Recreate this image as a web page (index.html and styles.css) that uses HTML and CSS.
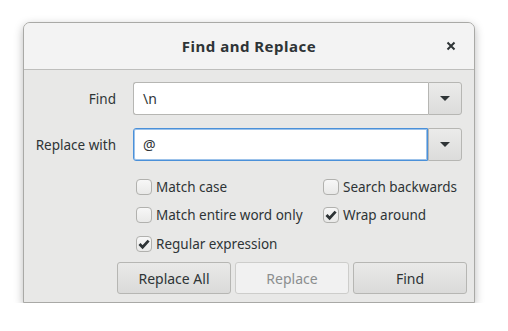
FILE: index.html
```html
<!DOCTYPE html>
<html>
<head>
<meta charset="utf-8">
<link rel="stylesheet" href="styles.css">
</head>
<body>
<div class="dialog">
  <div class="header">
    <div class="title">Find and Replace</div>
    <div class="close">
      <svg width="10" height="10" viewBox="0 0 10 10"><path d="M1.5 1.5 L8.5 8.5 M8.5 1.5 L1.5 8.5" stroke="#2e3436" stroke-width="2" fill="none"/></svg>
    </div>
  </div>
  <div class="content">
    <div class="form">
      <label class="label">Find</label>
      <div class="combo">
        <div class="entry">\n</div>
        <div class="drop"><span class="arrow"></span></div>
      </div>
      <label class="label">Replace with</label>
      <div class="combo">
        <div class="entry focus">@</div>
        <div class="drop"><span class="arrow"></span></div>
      </div>
    </div>
    <div class="options">
      <div class="opt"><span class="box"></span>Match case</div>
      <div class="opt"><span class="box"></span>Search backwards</div>
      <div class="opt"><span class="box"></span>Match entire word only</div>
      <div class="opt"><span class="box checked"><svg width="12" height="12" viewBox="0 0 12 12"><path d="M1.5 6 L4.6 9.2 L10.6 2.6" stroke="#2e3436" stroke-width="2.8" fill="none"/></svg></span>Wrap around</div>
      <div class="opt"><span class="box checked"><svg width="12" height="12" viewBox="0 0 12 12"><path d="M1.5 6 L4.6 9.2 L10.6 2.6" stroke="#2e3436" stroke-width="2.8" fill="none"/></svg></span>Regular expression</div>
    </div>
    <div class="buttons">
      <div class="btn">Replace All</div>
      <div class="btn disabled">Replace</div>
      <div class="btn">Find</div>
    </div>
  </div>
</div>
</body>
</html>
```
FILE: styles.css
```css
html, body {
  margin: 0;
  padding: 0;
  background: #ffffff;
}
body {
  padding: 22px 0 0 23px;
  font-family: "Noto Sans", "DejaVu Sans", sans-serif;
  font-size: 13.5px;
  color: #2e3436;
}
.dialog {
  width: 450px;
  height: 279px;
  border: 1px solid #a9a9a6;
  border-radius: 7px 7px 0 0;
  background: #e8e8e7;
  box-shadow: 0 3px 10px rgba(0,0,0,0.28);
  overflow: hidden;
  display: flex;
  flex-direction: column;
}
.header {
  height: 46px;
  background: #f3f3f3;
  border-bottom: 1px solid #bebebc;
  display: flex;
  align-items: center;
  justify-content: center;
  position: relative;
}
.title {
  font-weight: bold;
  font-size: 15px;
  letter-spacing: 0.5px;
  color: #2e3436;
}
.close {
  position: absolute;
  right: 18px;
  top: 18px;
  width: 10px;
  height: 10px;
  display: flex;
}
.content {
  padding: 12px 12px 0 11px;
  display: flex;
  flex-direction: column;
}
.form {
  display: grid;
  grid-template-columns: 81px 1fr;
  column-gap: 17px;
  row-gap: 13px;
  align-items: center;
}
.label {
  text-align: right;
  white-space: nowrap;
}
.combo {
  display: flex;
  height: 33px;
}
.entry {
  flex: 1;
  background: #ffffff;
  border: 1px solid #b6b6b3;
  border-right: none;
  border-radius: 3px 0 0 3px;
  padding: 0 9px;
  display: flex;
  align-items: center;
  font-size: 14px;
}
.entry.focus {
  border: 1px solid #4a90d9;
  box-shadow: inset 0 0 0 1px rgba(74,144,217,0.55);
  border-radius: 3px 0 0 3px;
}
.drop {
  width: 32px;
  border: 1px solid #b6b6b3;
  border-radius: 0 3px 3px 0;
  background: linear-gradient(#ebebea, #dcdcdb);
  display: flex;
  align-items: center;
  justify-content: center;
}
.arrow {
  width: 0;
  height: 0;
  border-left: 5px solid transparent;
  border-right: 5px solid transparent;
  border-top: 5px solid #2e3436;
}
.options {
  margin: 17px 0 0 101px;
  display: grid;
  grid-template-columns: 187px auto;
  grid-auto-rows: 20px;
  row-gap: 8.5px;
}
.opt {
  display: flex;
  align-items: center;
  gap: 4px;
  white-space: nowrap;
  margin-top: -3px;
}
.box {
  width: 14px;
  height: 14px;
  border: 1px solid #b1b1ae;
  border-radius: 4px;
  background: linear-gradient(#f7f7f7, #e9e9e8);
  display: flex;
  align-items: center;
  justify-content: center;
}
.buttons {
  margin: 7px -5px 0 0;
  display: flex;
  justify-content: flex-end;
  gap: 4px;
}
.btn {
  width: 112px;
  height: 30px;
  border: 1px solid #b6b6b3;
  border-radius: 3px;
  background: linear-gradient(#e9e9e8, #dadad9);
  display: flex;
  align-items: center;
  justify-content: center;
  font-size: 14px;
}
.btn.disabled {
  background: #f1f1f1;
  border-color: #cdcdcb;
  color: #8b8e8f;
}
```
